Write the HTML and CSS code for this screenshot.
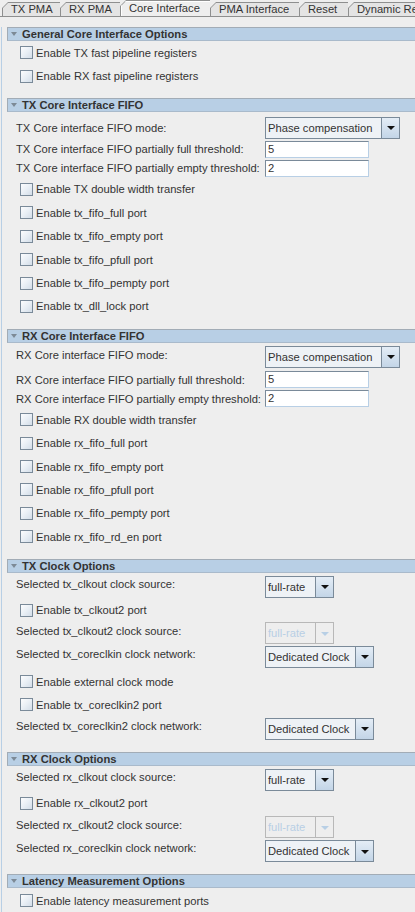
FILE: index.html
```html
<!DOCTYPE html>
<html>
<head>
<meta charset="utf-8">
<link rel="stylesheet" href="styles.css">
</head>
<body>
<div class="tabs">
  <div class="tab t1"><span class="ti">TX PMA</span></div>
  <div class="tab t2"><span class="ti">RX PMA</span></div>
  <div class="tab sel t3"><span class="ti">Core Interface</span></div>
  <div class="tab t4"><span class="ti">PMA Interface</span></div>
  <div class="tab t5"><span class="ti">Reset</span></div>
  <div class="tab t6"><span class="ti">Dynamic Reconfiguration</span></div>
</div>
<div class="pane">
  <div class="hdr first"><span class="tri"></span>General Core Interface Options</div>
  <div class="cb"><span class="box"></span>Enable TX fast pipeline registers</div>
  <div class="cb"><span class="box"></span>Enable RX fast pipeline registers</div>

  <div class="hdr"><span class="tri"></span>TX Core Interface FIFO</div>
  <div class="lr h22 m5"><span class="lbl">TX Core interface FIFO mode:</span><div class="combo w135"><span class="val">Phase compensation</span><span class="arr"><i></i></span></div></div>
  <div class="lr h19 m1"><span class="lbl">TX Core interface FIFO partially full threshold:</span><div class="field">5</div></div>
  <div class="lr h19"><span class="lbl">TX Core interface FIFO partially empty threshold:</span><div class="field">2</div></div>
  <div class="cb"><span class="box"></span>Enable TX double width transfer</div>
  <div class="cb"><span class="box"></span>Enable tx_fifo_full port</div>
  <div class="cb"><span class="box"></span>Enable tx_fifo_empty port</div>
  <div class="cb"><span class="box"></span>Enable tx_fifo_pfull port</div>
  <div class="cb"><span class="box"></span>Enable tx_fifo_pempty port</div>
  <div class="cb"><span class="box"></span>Enable tx_dll_lock port</div>

  <div class="hdr m11"><span class="tri"></span>RX Core Interface FIFO</div>
  <div class="lr h23 m2"><span class="lbl up2">RX Core interface FIFO mode:</span><div class="combo w135"><span class="val">Phase compensation</span><span class="arr"><i></i></span></div></div>
  <div class="lr h19 m2"><span class="lbl">RX Core interface FIFO partially full threshold:</span><div class="field">5</div></div>
  <div class="lr h19"><span class="lbl">RX Core interface FIFO partially empty threshold:</span><div class="field">2</div></div>
  <div class="cb"><span class="box"></span>Enable RX double width transfer</div>
  <div class="cb"><span class="box"></span>Enable rx_fifo_full port</div>
  <div class="cb"><span class="box"></span>Enable rx_fifo_empty port</div>
  <div class="cb"><span class="box"></span>Enable rx_fifo_pfull port</div>
  <div class="cb"><span class="box"></span>Enable rx_fifo_pempty port</div>
  <div class="cb"><span class="box"></span>Enable rx_fifo_rd_en port</div>

  <div class="hdr m11"><span class="tri"></span>TX Clock Options</div>
  <div class="lr h23 m2"><span class="lbl up3">Selected tx_clkout clock source:</span><div class="combo w69"><span class="val">full-rate</span><span class="arr"><i></i></span></div></div>
  <div class="cb"><span class="box"></span>Enable tx_clkout2 port</div>
  <div class="lr h23"><span class="lbl up2">Selected tx_clkout2 clock source:</span><div class="combo w69 dis"><span class="val">full-rate</span><span class="arr"><i></i></span></div></div>
  <div class="lr h24"><span class="lbl up3">Selected tx_coreclkin clock network:</span><div class="combo w109"><span class="val">Dedicated Clock</span><span class="arr"><i></i></span></div></div>
  <div class="cb m1"><span class="box"></span>Enable external clock mode</div>
  <div class="cb"><span class="box"></span>Enable tx_coreclkin2 port</div>
  <div class="lr h24"><span class="lbl up3">Selected tx_coreclkin2 clock network:</span><div class="combo w109"><span class="val">Dedicated Clock</span><span class="arr"><i></i></span></div></div>

  <div class="hdr m11"><span class="tri"></span>RX Clock Options</div>
  <div class="lr h24 m2"><span class="lbl up3">Selected rx_clkout clock source:</span><div class="combo w69"><span class="val">full-rate</span><span class="arr"><i></i></span></div></div>
  <div class="cb"><span class="box"></span>Enable rx_clkout2 port</div>
  <div class="lr h24"><span class="lbl up2">Selected rx_clkout2 clock source:</span><div class="combo w69 dis"><span class="val">full-rate</span><span class="arr"><i></i></span></div></div>
  <div class="lr h24"><span class="lbl up3">Selected rx_coreclkin clock network:</span><div class="combo w109"><span class="val">Dedicated Clock</span><span class="arr"><i></i></span></div></div>

  <div class="hdr m11"><span class="tri"></span>Latency Measurement Options</div>
  <div class="cb m1"><span class="box"></span>Enable latency measurement ports</div>
</div>
</body>
</html>
```
FILE: styles.css
```css
html, body {
  margin: 0;
  padding: 0;
  background: #eeeeee;
  overflow: hidden;
}
body {
  width: 415px;
  height: 912px;
  font-family: "Liberation Sans", Arial, sans-serif;
  font-size: 11.2px;
  color: #333333;
}
.tabs {
  display: flex;
  height: 17px;
  box-sizing: border-box;
  padding-left: 2px;
  align-items: flex-end;
  border-bottom: 1px solid #8e8f8f;
  white-space: nowrap;
  overflow: hidden;
}
.tab {
  box-sizing: border-box;
  height: 15px;
  margin-bottom: -1px;
  padding: 1px 0 0 1px;
  background: #8e8f8f;
  clip-path: polygon(0 6px, 6px 0, 100% 0, 100% 100%, 0 100%);
  display: flex;
  flex-shrink: 0;
}
.ti {
  flex: 1;
  background: #e4e4e4;
  clip-path: polygon(0 5px, 5px 0, 100% 0, 100% 100%, 0 100%);
  padding-left: 8px;
  line-height: 13px;
  white-space: nowrap;
  overflow: hidden;
}
.tab.sel {
  height: 17px;
}
.tab.sel .ti {
  background: #eeeeee;
  line-height: 15px;
  box-shadow: inset 1px 1px 0 #ffffff;
}
.t1 { width: 58px; }
.t2 { width: 60px; }
.t3 { width: 90px; }
.t4 { width: 89px; }
.t5 { width: 49px; }
.t6 { width: 120px; }

.pane {
  border-left: 1px solid #b8cfe5;
  margin-left: 1px;
}
.hdr {
  box-sizing: border-box;
  height: 14px;
  margin-top: 10px;
  margin-left: 5px;
  margin-right: -2px;
  background: #b8cfe5;
  border: 1px solid #a2acb6;
  border-bottom-color: #a9bacb;
  font-weight: bold;
  line-height: 12px;
  display: flex;
  align-items: center;
  color: #333333;
}
.hdr.m11 { margin-top: 11px; }
.tri {
  width: 0;
  height: 0;
  border-left: 3px solid transparent;
  border-right: 3px solid transparent;
  border-top: 4px solid #7d8a96;
  margin-left: 3px;
  margin-right: 5px;
}
.cb {
  height: 23.4px;
  display: flex;
  align-items: center;
  padding-left: 18px;
}
.cb.m1 { margin-top: 1px; }
.box {
  box-sizing: border-box;
  width: 13px;
  height: 13px;
  border: 1px solid #7a8a99;
  background: linear-gradient(135deg, #fdfdfe 0%, #e9eff5 50%, #d3dde8 100%);
  margin-right: 3px;
  flex-shrink: 0;
}
.lr {
  display: flex;
  align-items: center;
  padding-left: 14px;
}
.h19 { height: 19px; }
.h22 { height: 22px; }
.h23 { height: 23px; }
.h24 { height: 24px; }
.m1 { margin-top: 1px; }
.m2 { margin-top: 2px; }
.m5 { margin-top: 5px; }
.lbl {
  width: 249px;
  flex-shrink: 0;
  white-space: nowrap;
}
.up2 { padding-bottom: 4px; }
.up3 { padding-bottom: 6px; }
.combo {
  box-sizing: border-box;
  height: 22px;
  display: flex;
  border: 1px solid #7a8a99;
  background: #eef2f6;
}
.w135 { width: 135px; }
.w109 { width: 109px; }
.w69 { width: 69px; }
.val {
  flex: 1;
  padding-left: 2px;
  line-height: 20px;
  white-space: nowrap;
  overflow: hidden;
}
.arr {
  box-sizing: border-box;
  width: 18px;
  border-left: 1px solid #7a8a99;
  background: linear-gradient(#e4edf6, #c3d5e7);
  display: flex;
  align-items: center;
  justify-content: center;
}
.arr i {
  width: 0;
  height: 0;
  border-left: 4px solid transparent;
  border-right: 4px solid transparent;
  border-top: 4px solid #111111;
  margin-top: 1px;
}
.combo.dis {
  border-color: #b8b8b8;
  background: #eeeeee;
  color: #b8cfe5;
}
.combo.dis .arr {
  border-left-color: #b8b8b8;
  background: #eeeeee;
}
.combo.dis .arr i { border-top-color: #b8cfe5; }
.field {
  box-sizing: border-box;
  width: 104px;
  height: 17px;
  background: #ffffff;
  border: 1px solid #7a8a99;
  border-right-color: #b8cfe5;
  border-bottom-color: #b8cfe5;
  padding-left: 2px;
  line-height: 15px;
}
```
